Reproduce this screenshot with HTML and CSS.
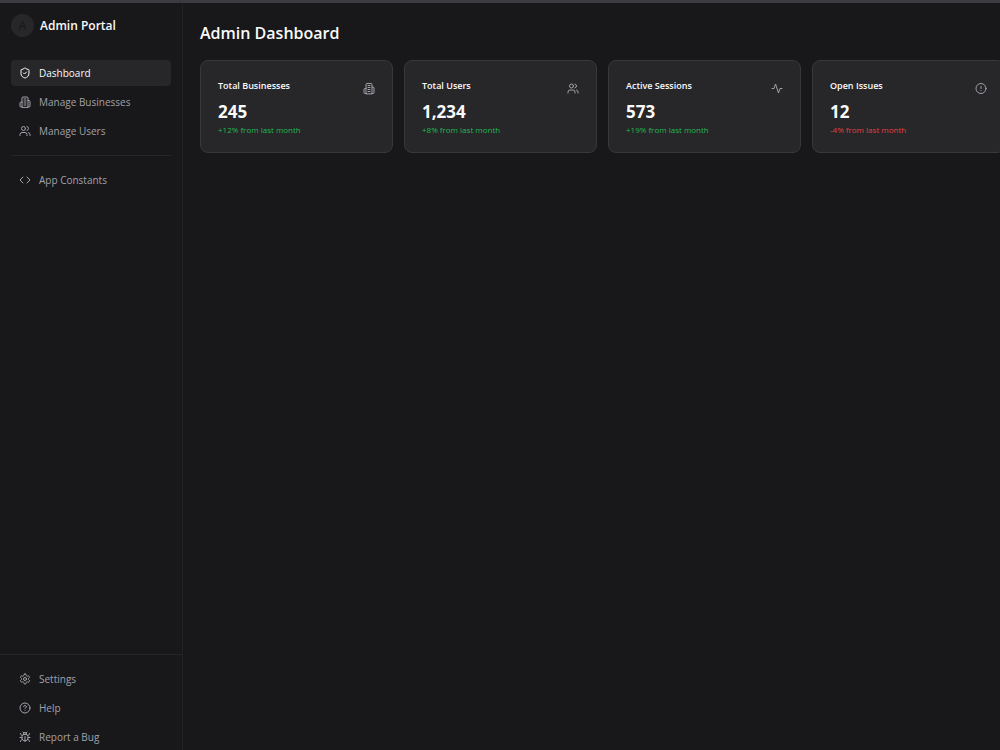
FILE: index.html
```html
<!DOCTYPE html>
<html lang="en">
<head>
<meta charset="utf-8">
<meta name="viewport" content="width=device-width, initial-scale=1">
<title>Admin Dashboard</title>
<link rel="stylesheet" href="styles.css">
</head>
<body>
<svg class="sprite" aria-hidden="true">
  <symbol id="shield" viewBox="0 0 24 24"><path d="M20 13c0 5-3.500 7.500-7.660 8.950a1 1 0 0 1-.67-.01C7.500 20.500 4 18 4 13V6a1 1 0 0 1 1-1c2 0 4.500-1.200 6.240-2.720a1.170 1.170 0 0 1 1.520 0C14.510 3.810 17 5 19 5a1 1 0 0 1 1 1z"/><path d="m9 12 2 2 4-4"/></symbol>
  <symbol id="building" viewBox="0 0 24 24"><path d="M6 22V4a2 2 0 0 1 2-2h8a2 2 0 0 1 2 2v18Z"/><path d="M6 12H4a2 2 0 0 0-2 2v6a2 2 0 0 0 2 2h2M18 9h2a2 2 0 0 1 2 2v9a2 2 0 0 1-2 2h-2M10 6h4M10 10h4M10 14h4M10 18h4"/></symbol>
  <symbol id="users" viewBox="0 0 24 24"><path d="M16 21v-2a4 4 0 0 0-4-4H6a4 4 0 0 0-4 4v2"/><circle cx="9" cy="7" r="4"/><path d="M22 21v-2a4 4 0 0 0-3-3.870M16 3.130a4 4 0 0 1 0 7.750"/></symbol>
  <symbol id="code" viewBox="0 0 24 24"><path d="m16 18 6-6-6-6M8 6l-6 6 6 6"/></symbol>
  <symbol id="settings" viewBox="0 0 24 24"><path d="M12.220 2h-.44a2 2 0 0 0-2 2v.18a2 2 0 0 1-1 1.730l-.43.25a2 2 0 0 1-2 0l-.15-.08a2 2 0 0 0-2.730.73l-.22.38a2 2 0 0 0 .73 2.730l.15.1a2 2 0 0 1 1 1.720v.51a2 2 0 0 1-1 1.740l-.15.09a2 2 0 0 0-.73 2.730l.22.38a2 2 0 0 0 2.730.73l.15-.08a2 2 0 0 1 2 0l.43.25a2 2 0 0 1 1 1.730V20a2 2 0 0 0 2 2h.44a2 2 0 0 0 2-2v-.18a2 2 0 0 1 1-1.730l.43-.25a2 2 0 0 1 2 0l.15.08a2 2 0 0 0 2.730-.73l.22-.39a2 2 0 0 0-.73-2.730l-.15-.08a2 2 0 0 1-1-1.740v-.5a2 2 0 0 1 1-1.740l.15-.09a2 2 0 0 0 .73-2.730l-.22-.38a2 2 0 0 0-2.730-.73l-.15.08a2 2 0 0 1-2 0l-.43-.25a2 2 0 0 1-1-1.730V4a2 2 0 0 0-2-2z"/><circle cx="12" cy="12" r="3"/></symbol>
  <symbol id="help" viewBox="0 0 24 24"><circle cx="12" cy="12" r="10"/><path d="M9.090 9a3 3 0 0 1 5.830 1c0 2-3 3-3 3M12 17h.01"/></symbol>
  <symbol id="bug" viewBox="0 0 24 24"><path d="m8 2 1.880 1.880M14.120 3.880 16 2M9 7.130v-1a3.003 3.003 0 1 1 6 0v1M12 20c-3.300 0-6-2.700-6-6v-3a4 4 0 0 1 4-4h4a4 4 0 0 1 4 4v3c0 3.300-2.700 6-6 6M12 20v-9M6.530 9C4.600 8.800 3 7.100 3 5M6 13H2M3 21c0-2.100 1.700-3.900 3.800-4M20.970 5c0 2.100-1.600 3.800-3.500 4M22 13h-4M17.200 17c2.100.1 3.800 1.900 3.800 4"/></symbol>
  <symbol id="activity" viewBox="0 0 24 24"><path d="M22 12h-4l-3 9L9 3l-3 9H2"/></symbol>
  <symbol id="alert" viewBox="0 0 24 24"><circle cx="12" cy="12" r="10"/><path d="M12 8v4M12 16h.01"/></symbol>
</svg>
<div class="app">
  <aside class="sidebar">
    <div class="brand"><span class="avatar">A</span><span class="brand-name">Admin Portal</span></div>
    <nav class="nav" aria-label="Main">
      <a class="nav-link active" href="#" aria-current="page"><svg class="icon"><use href="#shield"/></svg>Dashboard</a>
      <a class="nav-link" href="#"><svg class="icon"><use href="#building"/></svg>Manage Businesses</a>
      <a class="nav-link" href="#"><svg class="icon"><use href="#users"/></svg>Manage Users</a>
      <hr class="divider">
      <a class="nav-link" href="#"><svg class="icon"><use href="#code"/></svg>App Constants</a>
    </nav>
    <nav class="nav footer-nav" aria-label="Support">
      <a class="nav-link" href="#"><svg class="icon"><use href="#settings"/></svg>Settings</a>
      <a class="nav-link" href="#"><svg class="icon"><use href="#help"/></svg>Help</a>
      <a class="nav-link" href="#"><svg class="icon"><use href="#bug"/></svg>Report a Bug</a>
    </nav>
  </aside>
  <main class="main">
    <h1 class="title">Admin Dashboard</h1>
    <div class="cards">
      <section class="card">
        <div class="card-head"><h2 class="card-title">Total Businesses</h2><svg class="icon"><use href="#building"/></svg></div>
        <div class="value">245</div><p class="change">+12% from last month</p>
      </section>
      <section class="card">
        <div class="card-head"><h2 class="card-title">Total Users</h2><svg class="icon"><use href="#users"/></svg></div>
        <div class="value">1,234</div><p class="change">+8% from last month</p>
      </section>
      <section class="card">
        <div class="card-head"><h2 class="card-title">Active Sessions</h2><svg class="icon"><use href="#activity"/></svg></div>
        <div class="value">573</div><p class="change">+19% from last month</p>
      </section>
      <section class="card">
        <div class="card-head"><h2 class="card-title">Open Issues</h2><svg class="icon"><use href="#alert"/></svg></div>
        <div class="value">12</div><p class="change down">-4% from last month</p>
      </section>
    </div>
  </main>
</div>
</body>
</html>
```
FILE: styles.css
```css
* { box-sizing: border-box; }
body {
  margin: 0;
  background: #18181a;
  color: #fafafa;
  font: 10px/14px "Open Sans", "Noto Sans", sans-serif;
}
h1, h2, p { margin: 0; }
.sprite { position: absolute; width: 0; height: 0; }
.app {
  display: flex;
  height: 100vh;
  border-top: 3px solid #3b3b42;
  overflow: hidden;
}
.sidebar {
  display: flex;
  flex-direction: column;
  flex: 0 0 183px;
  border-right: 1px solid #222225;
}
.brand {
  display: flex;
  align-items: center;
  gap: 6px;
  padding: 11px;
}
.avatar {
  display: grid;
  place-items: center;
  width: 23px;
  height: 23px;
  border-radius: 50%;
  background: #27272a;
  color: #161618;
  font-size: 12px;
}
.brand-name { font-size: 12px; font-weight: 600; line-height: 20px; }
.nav {
  display: flex;
  flex-direction: column;
  gap: 3px;
  padding: 12px 11px;
}
.nav-link {
  display: flex;
  align-items: center;
  gap: 8px;
  height: 26px;
  padding: 0 8px;
  border-radius: 4px;
  color: #a1a1aa;
  text-decoration: none;
}
.active { background: #27272a; color: #fafafa; }
.icon {
  flex: none;
  width: 12px;
  height: 12px;
  fill: none;
  stroke: currentColor;
  stroke-width: 2;
  stroke-linecap: round;
  stroke-linejoin: round;
}
.divider {
  width: 100%;
  height: 1px;
  margin: 8px 0;
  border: 0;
  background: #262629;
}
.footer-nav {
  margin-top: auto;
  padding: 11px 11px 0;
  border-top: 1px solid #262629;
}
.main { flex: 1; min-width: 0; padding: 17px 0 17px 17px; }
.title { font-size: 16px; font-weight: 600; line-height: 26px; }
.cards {
  display: grid;
  grid-template-columns: repeat(4, 1fr);
  gap: 11px;
  margin: 14px -5px 0 0;
}
.card {
  padding: 17px;
  border: 1px solid #38383b;
  border-radius: 8px;
  background: #27272a;
}
.card-head {
  display: flex;
  justify-content: space-between;
  align-items: flex-start;
}
.card-head .icon { height: 21px; color: #a1a1aa; }
.card-title { font-size: 9px; font-weight: 600; line-height: 16px; }
.value { font-size: 17px; font-weight: 700; line-height: 25px; }
.change { font-size: 8px; line-height: 11px; color: #22b850; }
.down { color: #e53e3e; }
```
